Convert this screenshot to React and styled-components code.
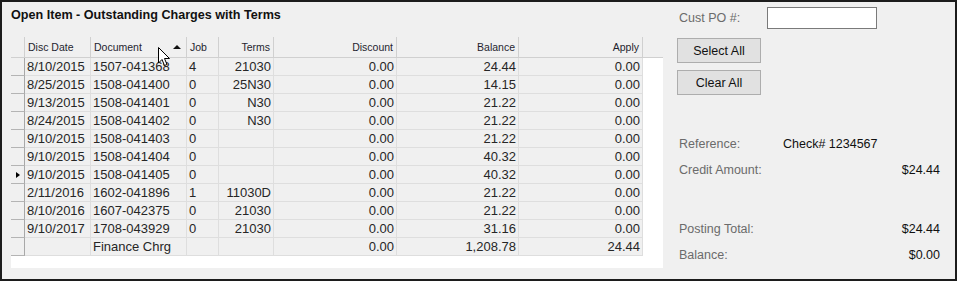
import React from "react";
import styled, { createGlobalStyle } from "styled-components";

const GlobalStyle = createGlobalStyle`
  body {
    margin: 0;
    background: #ffffff;
    font-family: "Liberation Sans", Arial, sans-serif;
  }
`;

const columns = [
  { key: "date", title: "Disc Date", align: "left" },
  { key: "doc", title: "Document", align: "left", sorted: true },
  { key: "job", title: "Job", align: "left" },
  { key: "terms", title: "Terms", align: "right" },
  { key: "discount", title: "Discount", align: "right" },
  { key: "balance", title: "Balance", align: "right" },
  { key: "apply", title: "Apply", align: "right" },
];

const rows = [
  ["8/10/2015", "1507-041368", "4", "21030", "0.00", "24.44", "0.00"],
  ["8/25/2015", "1508-041400", "0", "25N30", "0.00", "14.15", "0.00"],
  ["9/13/2015", "1508-041401", "0", "N30", "0.00", "21.22", "0.00"],
  ["8/24/2015", "1508-041402", "0", "N30", "0.00", "21.22", "0.00"],
  ["9/10/2015", "1508-041403", "0", "", "0.00", "21.22", "0.00"],
  ["9/10/2015", "1508-041404", "0", "", "0.00", "40.32", "0.00"],
  ["9/10/2015", "1508-041405", "0", "", "0.00", "40.32", "0.00"],
  ["2/11/2016", "1602-041896", "1", "11030D", "0.00", "21.22", "0.00"],
  ["8/10/2016", "1607-042375", "0", "21030", "0.00", "21.22", "0.00"],
  ["9/10/2017", "1708-043929", "0", "21030", "0.00", "31.16", "0.00"],
  ["", "Finance Chrg", "", "", "0.00", "1,208.78", "24.44"],
];

const currentRow = 6;

const Frame = styled.div`
  position: relative;
  width: 957px;
  height: 281px;
  box-sizing: border-box;
  border: 2px solid #1c1c1c;
  background: #f0f0f0;
  display: flex;
`;

const LeftPane = styled.div`
  width: 661px;
  padding-left: 9px;
  box-sizing: border-box;
  display: flex;
  flex-direction: column;
`;

const Title = styled.div`
  margin-top: 5px;
  height: 16px;
  line-height: 16px;
  font-size: 12.6px;
  font-weight: bold;
  color: #111;
`;

const Grid = styled.div`
  margin-top: 14px;
  width: 652px;
  height: 231px;
  background: #ffffff;
  display: grid;
  grid-template-columns: 14px 66px 96px 32px 55px 123px 122px 124px 1fr;
  grid-auto-rows: 18px;
  grid-template-rows: 21px;
  align-content: start;
`;

const HeadCell = styled.div`
  background: #f0f0f0;
  border-right: ${(p) => (p.$filler ? "none" : "1px solid #d0d0d0")};
  border-bottom: 1px solid #d0d0d0;
  display: flex;
  align-items: center;
  justify-content: ${(p) => (p.$align === "right" ? "flex-end" : "space-between")};
  padding: 0 3px;
  font-size: 10.5px;
  color: #1f1f2f;
  box-sizing: border-box;
  white-space: nowrap;
`;

const SortArrow = styled.span`
  width: 0;
  height: 0;
  border-left: 4px solid transparent;
  border-right: 4px solid transparent;
  border-bottom: 4px solid #111;
  margin-right: 2px;
`;

const Selector = styled.div`
  background: #f0f0f0;
  border-right: 1px solid #a8a8a8;
  border-bottom: 1px solid #b4b4b4;
  box-sizing: border-box;
  display: flex;
  align-items: center;
  justify-content: center;
`;

const RowMark = styled.span`
  width: 0;
  height: 0;
  border-top: 3.5px solid transparent;
  border-bottom: 3.5px solid transparent;
  border-left: 4px solid #000;
  margin-left: 1px;
`;

const Cell = styled.div`
  background: #f0f0f0;
  border-right: 1px solid #dedede;
  border-bottom: 1px solid #dedede;
  box-sizing: border-box;
  padding: 0 2px;
  font-size: 13px;
  line-height: 17px;
  color: #262626;
  text-align: ${(p) => p.$align};
  white-space: nowrap;
  overflow: hidden;
`;

const Filler = styled.div`
  background: #ffffff;
`;

const RightPane = styled.div`
  flex: 1;
  padding: 5px 15px 0 14px;
  display: flex;
  flex-direction: column;
  font-size: 12.5px;
`;

const PoRow = styled.div`
  display: flex;
  align-items: center;
  height: 22px;
  padding-left: 2px;
`;

const Label = styled.span`
  color: #6b6b6b;
`;

const PoInput = styled.div`
  margin-left: 27px;
  width: 110px;
  height: 22px;
  box-sizing: border-box;
  background: #fff;
  border: 1px solid #7a7a7a;
`;

const Button = styled.button`
  width: 84px;
  height: 25px;
  margin-top: ${(p) => p.$top}px;
  background: #e1e1e1;
  border: 1px solid #adadad;
  font-family: "Liberation Sans", Arial, sans-serif;
  font-size: 12.5px;
  color: #111;
  padding: 0;
`;

const Summary = styled.div`
  display: grid;
  grid-template-columns: 104px 1fr;
  align-items: center;
  height: 26px;
  padding-left: 2px;
  margin-top: ${(p) => p.$top || 0}px;
`;

const Value = styled.span`
  color: #111;
  justify-self: ${(p) => (p.$left ? "start" : "end")};
`;

const Cursor = styled.svg`
  position: absolute;
  left: 156px;
  top: 45px;
`;

export default function App() {
  return (
    <>
      <GlobalStyle />
      <Frame>
        <LeftPane>
          <Title>Open Item - Outstanding Charges with Terms</Title>
          <Grid>
            <HeadCell />
            {columns.map((c) => (
              <HeadCell key={c.key} $align={c.align}>
                <span>{c.title}</span>
                {c.sorted && <SortArrow />}
              </HeadCell>
            ))}
            <HeadCell $filler />
            {rows.map((r, i) => (
              <React.Fragment key={i}>
                <Selector>{i === currentRow && <RowMark />}</Selector>
                {r.map((v, j) => (
                  <Cell key={j} $align={columns[j].align === "right" || j > 3 ? "right" : "left"}>
                    {v}
                  </Cell>
                ))}
                <Filler />
              </React.Fragment>
            ))}
          </Grid>
        </LeftPane>
        <RightPane>
          <PoRow>
            <Label>Cust PO #:</Label>
            <PoInput />
          </PoRow>
          <Button $top={9}>Select All</Button>
          <Button $top={7}>Clear All</Button>
          <Summary $top={36}>
            <Label>Reference:</Label>
            <Value $left>Check# 1234567</Value>
          </Summary>
          <Summary>
            <Label>Credit Amount:</Label>
            <Value>$24.44</Value>
          </Summary>
          <Summary $top={33}>
            <Label>Posting Total:</Label>
            <Value>$24.44</Value>
          </Summary>
          <Summary>
            <Label>Balance:</Label>
            <Value>$0.00</Value>
          </Summary>
        </RightPane>
        <Cursor width="13" height="20" viewBox="0 0 13 20">
          <path
            d="M0.5 0.5 L0.5 16 L4 12.5 L6.5 18.5 L9 17.5 L6.5 11.5 L11.5 11.5 Z"
            fill="#fff"
            stroke="#000"
            strokeWidth="1"
            strokeLinejoin="miter"
          />
        </Cursor>
      </Frame>
    </>
  );
}
